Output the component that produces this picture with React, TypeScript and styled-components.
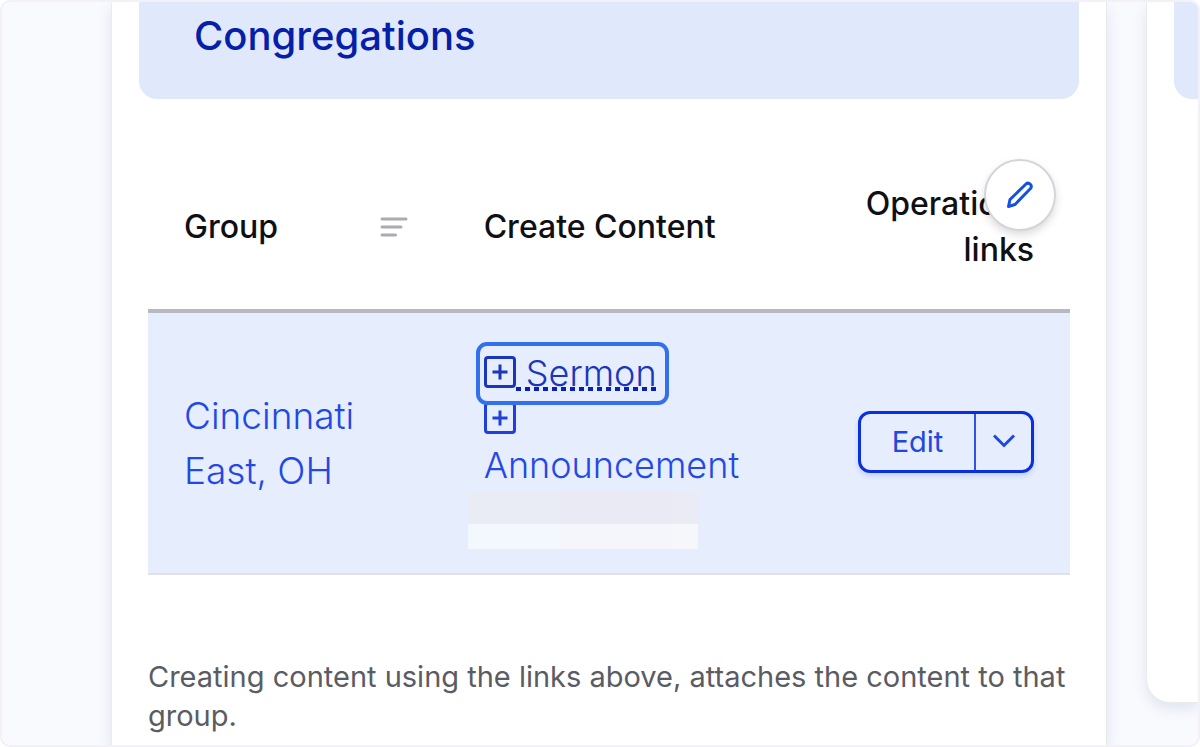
import React from "react";
import styled, { createGlobalStyle, css } from "styled-components";

const GlobalStyle = createGlobalStyle`
  *, *::before, *::after { box-sizing: border-box; }
  body {
    margin: 0;
    background: #ffffff;
    font-family: Inter, "Liberation Sans", sans-serif;
  }
`;

const Frame = styled.main`
  display: flex;
  gap: 39px;
  height: 100vh;
  padding-left: 109px;
  overflow: hidden;
  border: 2px solid #f3f1f7;
  border-radius: 10px;
  background: #f9fafe;
`;

const Card = styled.section<{ $aside?: boolean }>`
  position: relative;
  flex: 1 1 0;
  min-width: 0;
  padding: 0 27px;
  border: 1px solid #ebebeb;
  border-width: 0 1px;
  background: #ffffff;
  box-shadow: 0 6px 14px rgba(34, 72, 130, 0.12);

  ${({ $aside }) =>
    $aside &&
    css`
      flex: 0 0 52px;
      margin-bottom: 42px;
      padding-right: 0;
      border-width: 0 0 1px 1px;
      border-radius: 0 0 0 24px;
    `}
`;

const CardHeader = styled.header<{ $aside?: boolean }>`
  height: 97px;
  padding: 10px 55px;
  border-radius: ${({ $aside }) => ($aside ? "0 0 0 18px" : "0 0 18px 18px")};
  background: #e0e8fb;
`;

const Title = styled.h2`
  margin: 0;
  font-size: 40px;
  font-weight: 500;
  line-height: 48px;
  color: #0520a8;
`;

const CardBody = styled.div`
  padding: 46px 9px 0;
`;

const Table = styled.table`
  width: 100%;
  table-layout: fixed;
  border-collapse: collapse;
`;

const HeadCell = styled.th<{ $width?: string; $align?: string }>`
  width: ${({ $width }) => $width || "auto"};
  padding: 36px;
  border-bottom: 4px solid #b8b9c0;
  font-size: 32px;
  font-weight: 500;
  line-height: 46px;
  text-align: ${({ $align }) => $align || "left"};
  color: #101014;
`;

const SortButton = styled.button`
  display: flex;
  align-items: center;
  justify-content: space-between;
  width: 100%;
  padding: 0 4px 0 0;
  border: 0;
  background: none;
  font: inherit;
  color: inherit;
  cursor: pointer;
`;

const Row = styled.tr`
  background: #e6edfd;
  border-bottom: 2px solid #dfe1e6;
`;

const Cell = styled.td<{ $align?: string }>`
  padding: 37px 36px 24px;
  vertical-align: middle;
  text-align: ${({ $align }) => $align || "left"};
`;

const CenterCell = styled(Cell)`
  padding: 0 36px;
`;

const ActionCell = styled(Cell)`
  padding: 0 36px 2px 0;
`;

const GroupLink = styled.a`
  display: block;
  font-size: 37px;
  font-weight: 300;
  line-height: 55px;
  text-decoration: none;
  color: #2448e4;
`;

const CreateLink = styled.a<{ $active?: boolean }>`
  display: block;
  position: relative;
  width: max-content;
  font-size: 36px;
  font-weight: 300;
  line-height: 46px;
  text-decoration: none;
  color: ${({ $active }) => ($active ? "#1a36bc" : "#2448e4")};

  svg {
    display: inline-block;
    vertical-align: -2px;
  }

  ${({ $active }) =>
    $active &&
    css`
      z-index: 1;

      &::after {
        content: "";
        position: absolute;
        inset: -8px -12px -9px -8px;
        border: 4px solid #3270ee;
        border-radius: 11px;
      }
    `}
`;

const Dotted = styled.span`
  white-space: pre;
  background: repeating-linear-gradient(90deg, #0a1fb4 0 5px, transparent 5px 9px)
    left bottom 4px / 100% 4px no-repeat;
`;

const Redaction = styled.div`
  display: grid;
  grid-template-columns: 91fr 113fr 26fr;
  grid-template-rows: 33px 25px;
  width: 230px;
  margin: 3px 0 0 -16px;
`;

const Swatch = styled.span<{ $tone: string }>`
  background: ${({ $tone }) => $tone};
`;

const SplitButton = styled.div`
  display: inline-flex;
  height: 62px;
  border: 3px solid #0a2fe0;
  border-radius: 12px;
  box-shadow: 0 3px 5px rgba(30, 70, 200, 0.16);
  vertical-align: middle;
`;

const SplitPart = styled.button<{ $toggle?: boolean }>`
  display: flex;
  align-items: center;
  justify-content: center;
  width: ${({ $toggle }) => ($toggle ? "57px" : "113px")};
  padding: 0 0 2px;
  border: 0;
  border-left: ${({ $toggle }) => ($toggle ? "2px solid #2f55e4" : "0")};
  background: none;
  font-family: inherit;
  font-size: 29px;
  font-weight: 400;
  color: #1f48e0;
  cursor: pointer;
`;

const PencilButton = styled.button`
  position: absolute;
  top: 157px;
  right: 50px;
  display: flex;
  align-items: center;
  justify-content: center;
  width: 72px;
  height: 72px;
  padding: 0;
  border: 2px solid #d4d5da;
  border-radius: 50%;
  background: #ffffff;
  box-shadow: 0 4px 8px rgba(0, 0, 0, 0.14);
  cursor: pointer;
`;

const Note = styled.p`
  margin: 82px 0 0;
  font-size: 29px;
  font-weight: 400;
  line-height: 39px;
  color: #5b5c63;
`;

const PlusBox = ({ color }: { color: string }) => (
  <svg width="32" height="32" viewBox="0 0 32 32" fill="none" stroke={color} strokeWidth="3" aria-hidden="true">
    <rect x="1.5" y="1.5" width="29" height="29" rx="2.5" />
    <path d="M16 8.5v15M8.5 16h15" />
  </svg>
);

const SortIcon = () => (
  <svg width="28" height="22" viewBox="0 0 28 22" stroke="#abacb2" strokeWidth="3" strokeLinecap="round" aria-hidden="true">
    <path d="M2 3h24M2 11h19M2 19h13.5" />
  </svg>
);

const PencilIcon = () => (
  <svg
    width="28"
    height="28"
    viewBox="0 0 28 28"
    fill="none"
    stroke="#1450e6"
    strokeWidth="3"
    strokeLinejoin="round"
    aria-hidden="true"
  >
    <path d="M2.500 25.500l1.500-7L20 3q2.200-1.800 4.300 0.300q1.900 2.100 0.200 4.200L9 23.500z" />
  </svg>
);

const ChevronIcon = () => (
  <svg width="24" height="14" viewBox="0 0 24 14" fill="none" stroke="#1f48e0" strokeWidth="3" aria-hidden="true">
    <path d="M2 1.500l10 10l10-10" />
  </svg>
);

const tones = ["#e9ebf5", "#eaeaf4", "#ebebf5", "#f3f7fe", "#f4f6fb", "#f5f7fa"];

export default function App() {
  return (
    <>
      <GlobalStyle />
      <Frame>
        <Card>
          <CardHeader>
            <Title>Congregations</Title>
          </CardHeader>
          <CardBody>
            <Table>
              <thead>
                <tr>
                  <HeadCell $width="32.5%">
                    <SortButton type="button">
                      Group
                      <SortIcon />
                    </SortButton>
                  </HeadCell>
                  <HeadCell>Create Content</HeadCell>
                  <HeadCell $width="26.5%" $align="right">
                    Operations links
                  </HeadCell>
                </tr>
              </thead>
              <tbody>
                <Row>
                  <CenterCell>
                    <GroupLink href="#group">
                      Cincinnati
                      <br />
                      East, OH
                    </GroupLink>
                  </CenterCell>
                  <Cell>
                    <CreateLink href="#sermon" $active>
                      <PlusBox color="#1a36bc" />
                      <Dotted> Sermon</Dotted>
                    </CreateLink>
                    <CreateLink href="#announcement">
                      <PlusBox color="#2040dc" />
                      <br />
                      Announcement
                    </CreateLink>
                    <Redaction aria-hidden="true">
                      {tones.map((tone) => (
                        <Swatch key={tone} $tone={tone} />
                      ))}
                    </Redaction>
                  </Cell>
                  <ActionCell $align="right">
                    <SplitButton>
                      <SplitPart type="button">Edit</SplitPart>
                      <SplitPart type="button" $toggle aria-label="List additional actions">
                        <ChevronIcon />
                      </SplitPart>
                    </SplitButton>
                  </ActionCell>
                </Row>
              </tbody>
            </Table>
            <Note>Creating content using the links above, attaches the content to that group.</Note>
          </CardBody>
          <PencilButton type="button" aria-label="Open configuration options">
            <PencilIcon />
          </PencilButton>
        </Card>
        <Card $aside>
          <CardHeader $aside />
        </Card>
      </Frame>
    </>
  );
}
